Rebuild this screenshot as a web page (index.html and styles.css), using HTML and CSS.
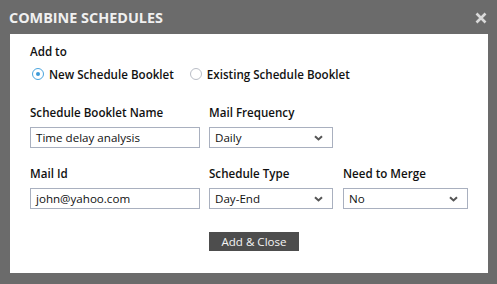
FILE: index.html
```html
<!DOCTYPE html>
<html lang="en">
<head>
  <meta charset="UTF-8">
  <title>Combine Schedules</title>
  <link rel="stylesheet" href="styles.css">
</head>
<body>
  <div class="dialog">
    <div class="dialog-head">
      <span class="dialog-title">COMBINE SCHEDULES</span>
      <svg class="dialog-close" width="12" height="12" viewBox="0 0 12 12"><path d="M1.5 1.5 L10.5 10.5 M10.5 1.5 L1.5 10.5" stroke="#d9d9d9" stroke-width="2.6"/></svg>
    </div>
    <div class="dialog-body">
      <div class="add-to">Add to</div>
      <div class="radio-row">
        <label class="radio"><span class="radio-dot checked"></span>New Schedule Booklet</label>
        <label class="radio"><span class="radio-dot"></span>Existing Schedule Booklet</label>
      </div>

      <div class="fields">
        <div class="field">
          <div class="field-label">Schedule Booklet Name</div>
          <div class="box w-name">Time delay analysis</div>
        </div>
        <div class="field">
          <div class="field-label">Mail Frequency</div>
          <div class="box select w-mid">Daily
            <svg class="chev" width="9" height="6" viewBox="0 0 9 6"><path d="M1 1.2 L4.5 4.5 L8 1.2" fill="none" stroke="#555" stroke-width="2"/></svg>
          </div>
        </div>
        <div class="field"></div>

        <div class="field row2">
          <div class="field-label">Mail Id</div>
          <div class="box w-name">john@yahoo.com</div>
        </div>
        <div class="field row2">
          <div class="field-label">Schedule Type</div>
          <div class="box select w-mid">Day-End
            <svg class="chev" width="9" height="6" viewBox="0 0 9 6"><path d="M1 1.2 L4.5 4.5 L8 1.2" fill="none" stroke="#555" stroke-width="2"/></svg>
          </div>
        </div>
        <div class="field row2">
          <div class="field-label">Need to Merge</div>
          <div class="box select w-last">No
            <svg class="chev" width="9" height="6" viewBox="0 0 9 6"><path d="M1 1.2 L4.5 4.5 L8 1.2" fill="none" stroke="#555" stroke-width="2"/></svg>
          </div>
        </div>
      </div>

      <div class="actions">
        <button class="btn">Add &amp; Close</button>
      </div>
    </div>
  </div>
</body>
</html>
```

FILE: styles.css
```css
*,*::before,*::after{margin:0;padding:0;box-sizing:border-box}
html,body{
  width:100%;height:100%;
  background:#6b6b6b;
  font-family:"Open Sans","Noto Sans",Arial,sans-serif;
  color:#111;
}

/* ===== CABEÇALHO ===== */
.dialog{padding:0 9px 11px 10px}
.dialog-head{
  height:34px;
  display:flex;
  align-items:center;
  justify-content:space-between;
}
.dialog-title{
  color:#f0f0f0;
  font-size:14.4px;
  font-weight:700;
  margin-left:-1px;
}
.dialog-close{margin-right:1px;margin-top:2px}

/* ===== CORPO ===== */
.dialog-body{
  background:#fff;
  height:239px;
  padding:10px 20px 0 20px;
}
.add-to{
  font-size:11.6px;
  font-weight:600;
  line-height:16px;
}
.radio-row{
  display:flex;
  margin-top:4px;
  height:20px;
  align-items:center;
}
.radio{
  display:flex;
  align-items:center;
  font-size:11.6px;
  font-weight:600;
  margin-left:2px;
  margin-right:14px;
}
.radio-dot{
  flex:none;
  width:12px;height:12px;
  border-radius:50%;
  border:1px solid #b9bdc6;
  margin-right:5px;
  position:relative;
}
.radio-dot.checked{border-color:#4aa5de}
.radio-dot.checked::after{
  content:"";
  position:absolute;
  left:3px;top:3px;
  width:4px;height:4px;
  border-radius:50%;
  background:#3d9ad8;
}

.fields{
  display:grid;
  grid-template-columns:179px 134px 125px;
  margin-top:21px;
}
.field-label{
  font-size:11.6px;
  font-weight:600;
  line-height:16px;
  margin-bottom:6px;
}
.row2{margin-top:18px}
.box{
  height:21px;
  border:1px solid #a9b0bf;
  font-size:11.6px;
  line-height:19px;
  padding-left:5px;
  position:relative;
}
.w-name{width:170px}
.w-mid{width:124px}
.w-last{width:125px}
.chev{position:absolute;right:9px;top:7px}

.actions{
  margin-top:20px;
  padding-left:179px;
}
.btn{
  width:90px;height:19px;
  border:none;
  background:#4d4d4d;
  color:#f4f4f4;
  font-family:inherit;
  font-size:11.6px;
}
```
